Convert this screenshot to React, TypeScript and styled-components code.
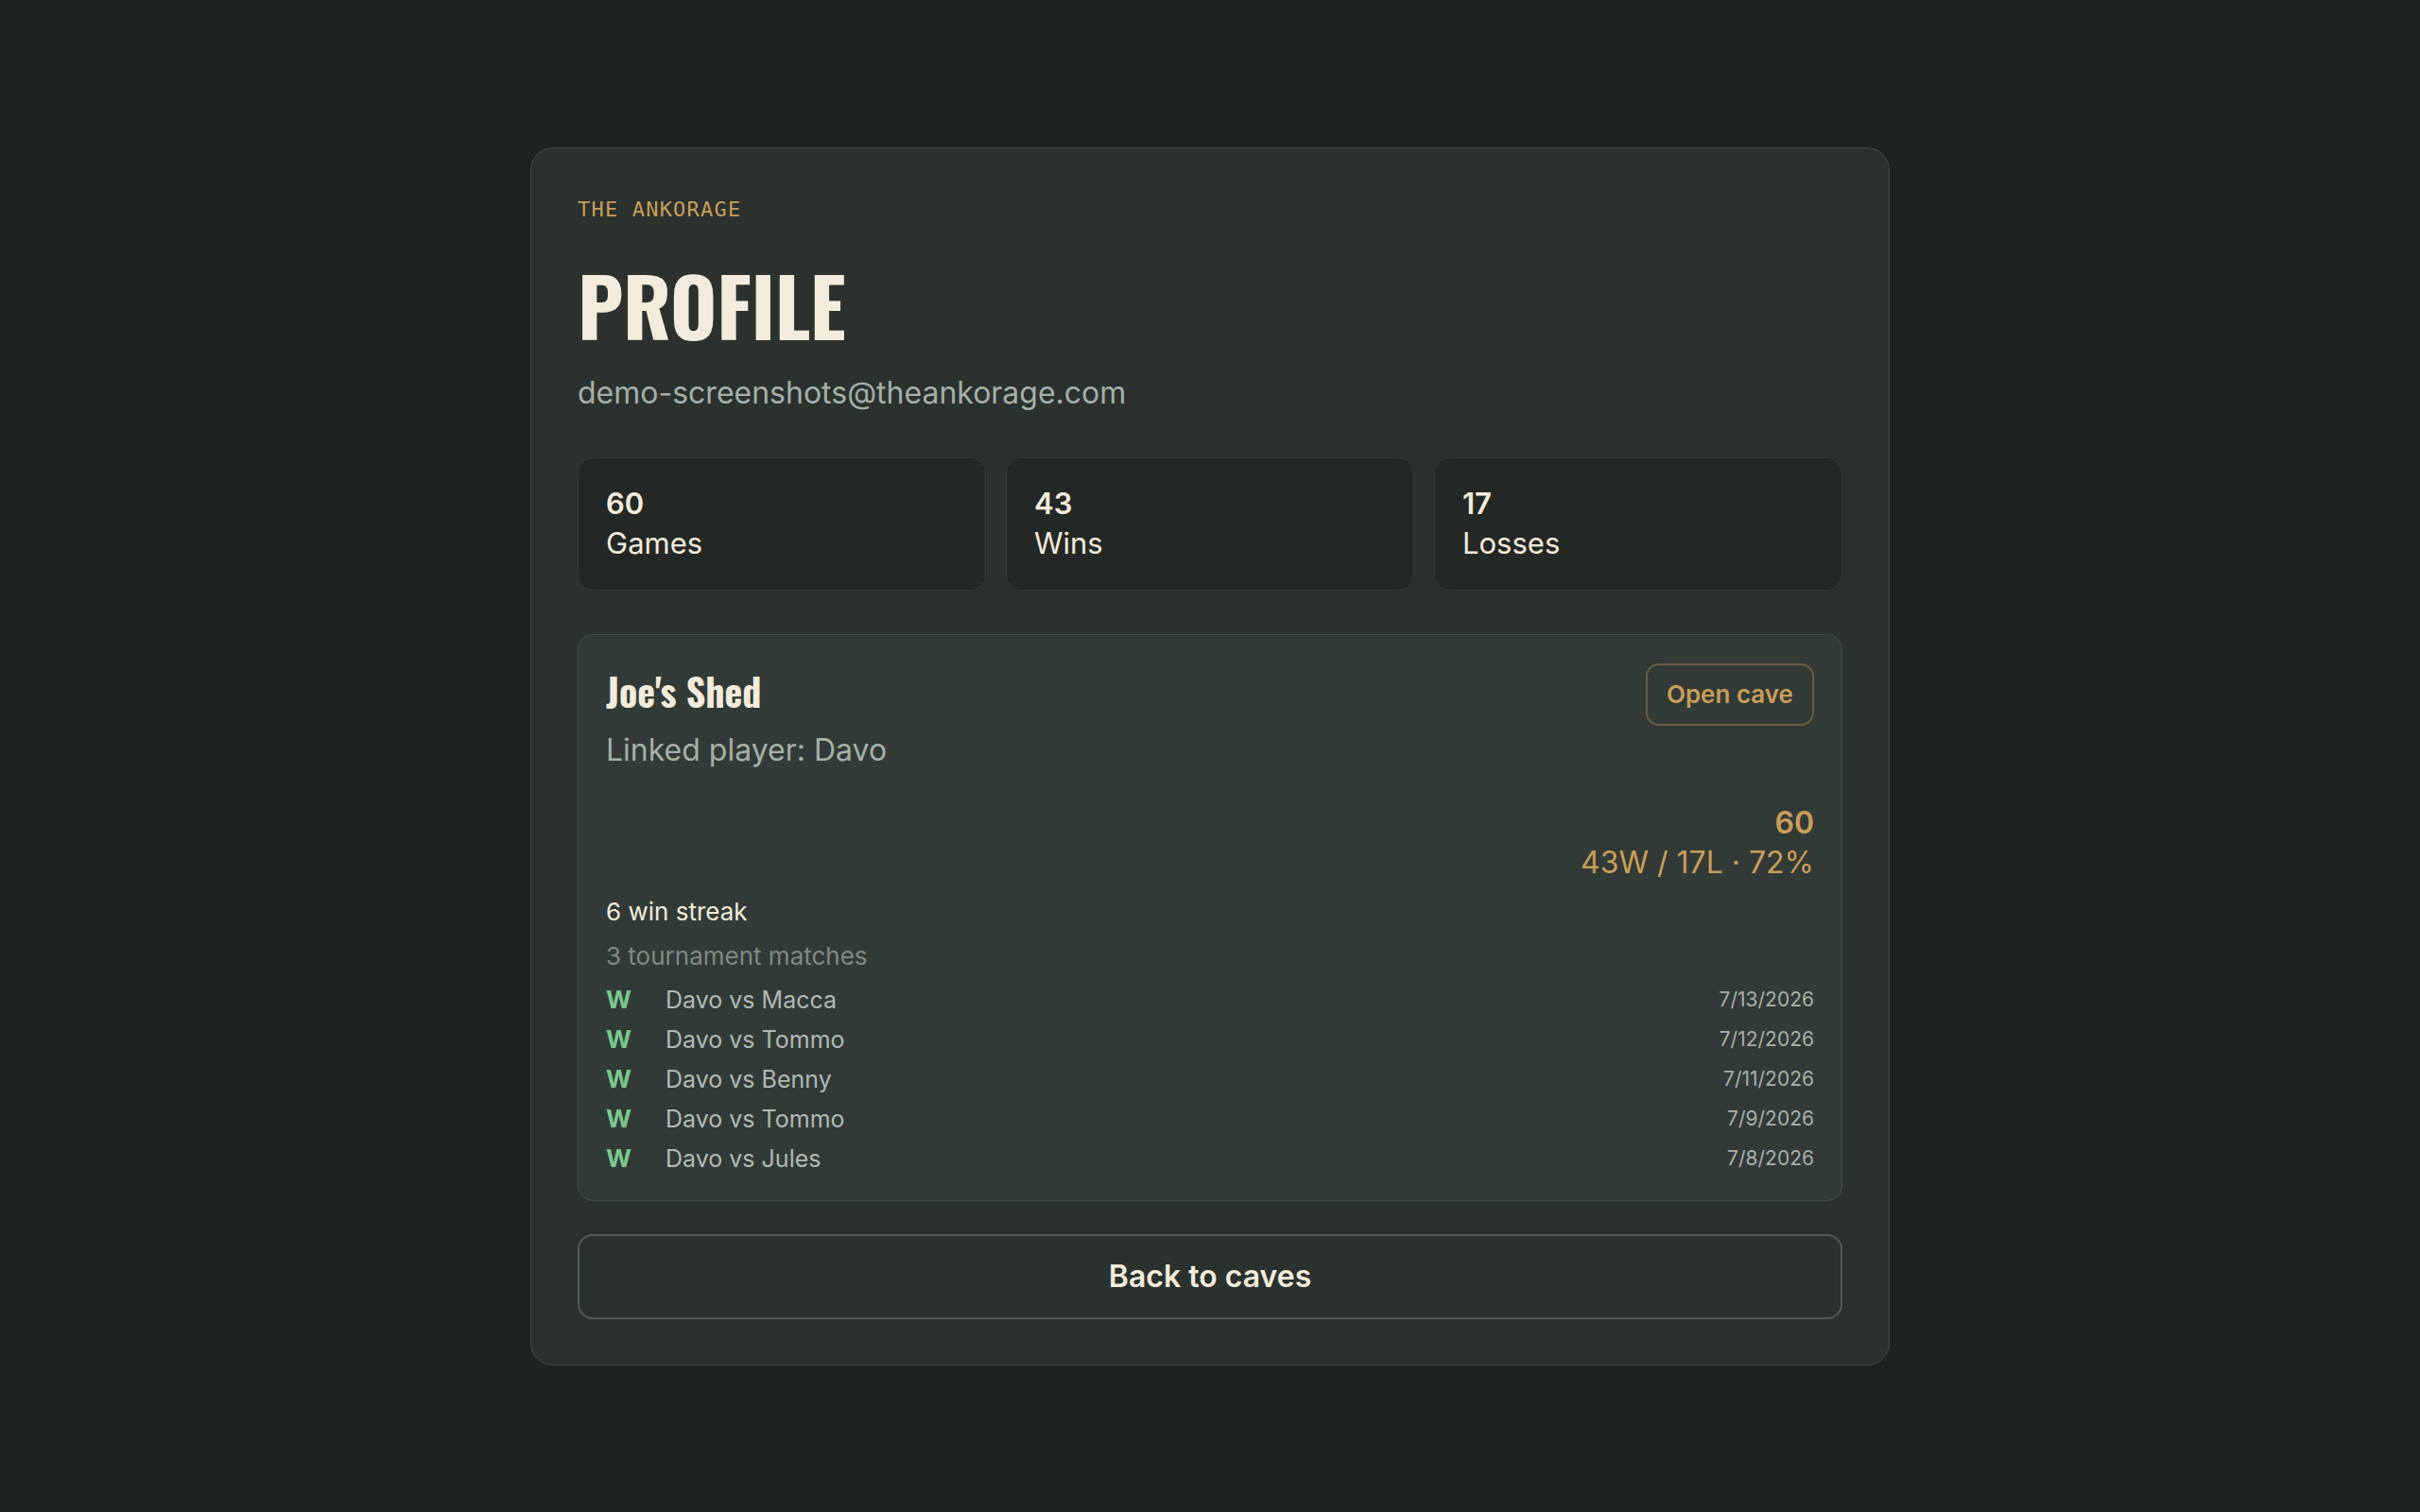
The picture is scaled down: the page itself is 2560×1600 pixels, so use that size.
import React from 'react'
import styled, { createGlobalStyle } from 'styled-components'

const GlobalStyle = createGlobalStyle`
  html, body {
    margin: 0;
    padding: 0;
    background: #1d2320;
  }
  body {
    font-family: Inter, "Noto Sans", "Liberation Sans", sans-serif;
    color: #f3ecdc;
  }
  * { box-sizing: border-box; }
`

const display = `"Oswald", "Roboto Condensed", "Liberation Sans Narrow", "DejaVu Sans Condensed", "Liberation Sans", sans-serif`

const Page = styled.main`
  min-height: 100vh;
  display: flex;
  align-items: center;
  justify-content: center;
`

const Card = styled.section`
  width: 1438px;
  padding: 51px 49px 48px;
  background: #2a312e;
  border: 1px solid #444b47;
  border-radius: 24px;
  display: flex;
  flex-direction: column;
`

const Eyebrow = styled.div`
  font-family: "DejaVu Sans Mono", "Liberation Mono", monospace;
  font-size: 22px;
  font-weight: 400;
  letter-spacing: 1.2px;
  color: #c99e58;
  line-height: 28px;
`

const Title = styled.h1`
  margin: 44px 0 0;
  font-family: ${display};
  font-size: 85px;
  font-weight: 700;
  line-height: 1;
  letter-spacing: -0.5px;
  color: #f3ecdc;
`

const Email = styled.div`
  margin-top: 31px;
  font-size: 32px;
  line-height: 40px;
  color: #a4b0a8;
`

const Stats = styled.div`
  margin-top: 48px;
  display: grid;
  grid-template-columns: repeat(3, 1fr);
  gap: 21px;
`

const StatBox = styled.div`
  background: #232826;
  border: 1px solid #343a37;
  border-radius: 16px;
  padding: 27px 29px 28px;
  display: flex;
  flex-direction: column;
`

const StatValue = styled.div`
  font-size: 31px;
  font-weight: 600;
  line-height: 42px;
  color: #f3ecdc;
`

const StatLabel = styled.div`
  font-size: 31px;
  line-height: 42px;
  color: #f3ecdc;
`

const CaveCard = styled.div`
  margin-top: 46px;
  background: #323a37;
  border: 1px solid #434c48;
  border-radius: 16px;
  padding: 29px 29px 23px;
  display: flex;
  flex-direction: column;
`

const CaveHead = styled.div`
  display: flex;
  justify-content: space-between;
  align-items: flex-start;
`

const CaveName = styled.h2`
  margin: 4px 0 0;
  font-family: ${display};
  font-size: 40px;
  font-weight: 700;
  line-height: 52px;
  color: #f3ecdc;
`

const OpenButton = styled.button`
  font-family: inherit;
  font-size: 26px;
  font-weight: 600;
  color: #c99e58;
  background: transparent;
  border: 2px solid #6a5c3e;
  border-radius: 14px;
  height: 66px;
  padding: 0 20px;
  margin-top: 1px;
`

const Linked = styled.div`
  margin-top: 5px;
  font-size: 32px;
  line-height: 42px;
  color: #a4b0a8;
`

const Record = styled.div`
  margin-top: 35px;
  display: flex;
  flex-direction: column;
  align-items: flex-end;
  color: #c99e58;
`

const RecordTotal = styled.div`
  font-size: 32px;
  font-weight: 600;
  line-height: 42px;
`

const RecordLine = styled.div`
  font-size: 32px;
  line-height: 42px;
`

const Streak = styled.div`
  margin-top: 10px;
  font-size: 26px;
  line-height: 42px;
  color: #f3ecdc;
`

const Tournaments = styled.div`
  margin-top: 5px;
  font-size: 26px;
  line-height: 42px;
  color: #7f8a84;
`

const Matches = styled.ul`
  list-style: none;
  margin: 4px 0 0;
  padding: 0;
  display: flex;
  flex-direction: column;
`

const MatchRow = styled.li`
  display: grid;
  grid-template-columns: 63px 1fr auto;
  align-items: center;
  height: 42px;
`

const Result = styled.span<{ $win: boolean }>`
  font-size: 26px;
  font-weight: 700;
  color: ${p => (p.$win ? '#79c98d' : '#d9776a')};
`

const Opponents = styled.span`
  font-size: 25px;
  color: #b0bab4;
`

const MatchDate = styled.span`
  font-size: 21px;
  color: #a7b0aa;
`

const BackButton = styled.button`
  margin-top: 35px;
  height: 90px;
  width: 100%;
  font-family: inherit;
  font-size: 32px;
  font-weight: 600;
  color: #f3ecdc;
  background: transparent;
  border: 2px solid #555b57;
  border-radius: 16px;
`

const matches = [
  { r: 'W', name: 'Davo vs Macca', date: '7/13/2026' },
  { r: 'W', name: 'Davo vs Tommo', date: '7/12/2026' },
  { r: 'W', name: 'Davo vs Benny', date: '7/11/2026' },
  { r: 'W', name: 'Davo vs Tommo', date: '7/9/2026' },
  { r: 'W', name: 'Davo vs Jules', date: '7/8/2026' },
]

const stats = [
  { value: 60, label: 'Games' },
  { value: 43, label: 'Wins' },
  { value: 17, label: 'Losses' },
]

const App = () => (
  <Page>
    <GlobalStyle />
    <Card>
      <Eyebrow>THE ANKORAGE</Eyebrow>
      <Title>PROFILE</Title>
      <Email>demo-screenshots@theankorage.com</Email>
      <Stats>
        {stats.map(s => (
          <StatBox key={s.label}>
            <StatValue>{s.value}</StatValue>
            <StatLabel>{s.label}</StatLabel>
          </StatBox>
        ))}
      </Stats>
      <CaveCard>
        <CaveHead>
          <CaveName>Joe's Shed</CaveName>
          <OpenButton>Open cave</OpenButton>
        </CaveHead>
        <Linked>Linked player: Davo</Linked>
        <Record>
          <RecordTotal>60</RecordTotal>
          <RecordLine>43W / 17L · 72%</RecordLine>
        </Record>
        <Streak>6 win streak</Streak>
        <Tournaments>3 tournament matches</Tournaments>
        <Matches>
          {matches.map((m, i) => (
            <MatchRow key={i}>
              <Result $win={m.r === 'W'}>{m.r}</Result>
              <Opponents>{m.name}</Opponents>
              <MatchDate>{m.date}</MatchDate>
            </MatchRow>
          ))}
        </Matches>
      </CaveCard>
      <BackButton>Back to caves</BackButton>
    </Card>
  </Page>
)

export default App
